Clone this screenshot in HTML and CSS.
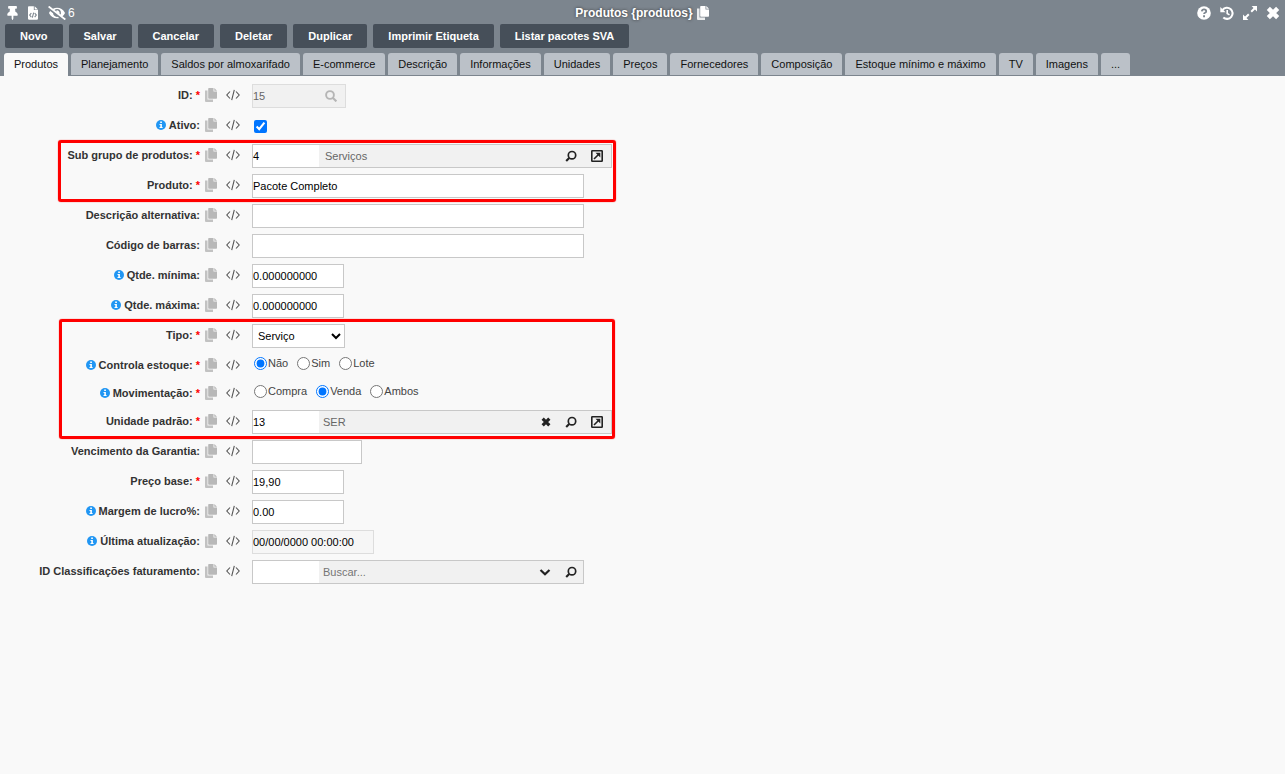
FILE: index.html
```html
<!DOCTYPE html>
<html lang="pt-BR">
<head>
<meta charset="utf-8">
<title>Produtos</title>
<link rel="stylesheet" href="styles.css">
</head>
<body>
<svg class="sprite" aria-hidden="true">
  <symbol id="pin" viewBox="0 0 384 512"><path d="M298 214.300L285.800 96H328c13.300 0 24-10.700 24-24V24c0-13.300-10.700-24-24-24H56C42.700 0 32 10.700 32 24v48c0 13.300 10.700 24 24 24h42.200L86 214.300C37.500 236.800 0 277.300 0 328c0 13.300 10.700 24 24 24h136v104c0 1.200.3 2.500.8 3.600l24 48c3 5.900 11.400 5.900 14.300 0l24-48a8 8 0 0 0 .9-3.600V352h136c13.300 0 24-10.700 24-24 0-51.200-38-91.400-86-113.700z"/></symbol>
  <symbol id="file" viewBox="0 0 12 16"><path fill-rule="evenodd" d="M1 0H7V4.500H12V15q0 1-1 1H1q-1 0-1-1V1Q0 0 1 0zM8 0L12 3.800H8z"/><path d="M4 8L2 10.500 4 13M8 8l2 2.500L8 13M6.800 7.500l-1.600 6" fill="none" stroke="#7c858e" stroke-width="1.300"/></symbol>
  <symbol id="eye" viewBox="0 0 640 512"><path d="M320 400c-75.850 0-137.250-58.710-142.900-133.110L72.200 185.820c-13.790 17.300-26.480 35.590-36.720 55.590a32.350 32.350 0 0 0 0 29.190C89.710 376.410 197.070 448 320 448c26.910 0 52.870-4 77.890-10.460L346 397.390a144.130 144.130 0 0 1-26 2.610zm313.820 58.100l-110.550-85.440a331.250 331.250 0 0 0 81.250-102.070 32.350 32.350 0 0 0 0-29.190C550.290 135.590 442.930 64 320 64a308.150 308.150 0 0 0-147.320 37.700L45.460 3.370A16 16 0 0 0 23 6.180L3.370 31.450A16 16 0 0 0 6.180 53.900l588.360 454.730a16 16 0 0 0 22.460-2.810l19.640-25.270a16 16 0 0 0-2.820-22.450zM450.190 314.540L411 284.250a93.700 93.700 0 0 0 4.900-28.250 94.770 94.770 0 0 0-121-92.320A47.650 47.650 0 0 1 304 192a46.640 46.640 0 0 1-1.540 10l-73.610-56.890A142.310 142.310 0 0 1 320 112a143.920 143.920 0 0 1 144 144c0 21.630-5.290 41.790-13.810 58.540z"/></symbol>
  <symbol id="copy" viewBox="0 0 12 14"><path d="M0 2.500h2.500V11.500H8V14H1q-1 0-1-1z" opacity=".85"/><path d="M4 0H8.500V3.500H12V10q0 .8-.8.8H4q-.8 0-.8-.8V.8Q3.200 0 4 0zM9.300 0L12 2.700H9.300z"/></symbol>
  <symbol id="code" viewBox="0 0 14 12"><path d="M4 2.500L.8 6 4 9.500M10 2.500L13.200 6 10 9.500M8.300.8L5.700 11.200" fill="none" stroke="currentColor" stroke-width="1.100"/></symbol>
  <symbol id="info" viewBox="0 0 10 10"><circle cx="5" cy="5" r="5"/><path d="M4.200 1.600h1.700v1.500H4.200zM3.500 4h2.400v3h.7v1.100H3.500V7h.8V5.100h-.8z" fill="#fff"/></symbol>
  <symbol id="search" viewBox="0 0 12 12"><circle cx="5" cy="5" r="3.900" fill="none" stroke="currentColor" stroke-width="1.900"/><path d="M8 8l3.400 3.400" stroke="currentColor" stroke-width="2.100"/></symbol>
  <symbol id="find" viewBox="0 0 12 12"><circle cx="7" cy="5.200" r="3.700" fill="none" stroke="currentColor" stroke-width="1.700"/><path d="M4.200 8L1.200 11" stroke="currentColor" stroke-width="2.100"/></symbol>
  <symbol id="open" viewBox="0 0 12 12"><rect x=".8" y=".8" width="10.400" height="10.400" rx=".5" fill="none" stroke="currentColor" stroke-width="1.600"/><path d="M3 9l4.500-4.500" stroke="currentColor" stroke-width="1.600"/><path d="M4.500 2.700h4.800v4.800z"/></symbol>
  <symbol id="close" viewBox="0 0 12 12"><path d="M2 2l8 8M10 2l-8 8" stroke="currentColor" stroke-width="3.800"/></symbol>
  <symbol id="down" viewBox="0 0 12 12"><path d="M1.500 4L6 8.300 10.500 4" fill="none" stroke="currentColor" stroke-width="2.200"/></symbol>
  <symbol id="help" viewBox="0 0 14 14"><circle cx="7" cy="7" r="6.800"/><path d="M4.800 5.300q.3-1.900 2.200-1.900 2.200 0 2.200 1.800 0 1-1.200 1.600-.9.400-.9 1.300" fill="none" stroke="#7c858e" stroke-width="1.800"/><path d="M6.100 9.300h1.900v1.900H6.100z" fill="#7c858e"/></symbol>
  <symbol id="history" viewBox="0 0 14 14"><path d="M2.600 3.800A5.600 5.600 0 1 1 3.300 11.500" fill="none" stroke="currentColor" stroke-width="2.100"/><path d="M.3.900V6.200H5.600z"/><path d="M7.200 3.900v3.600l2.300 1.400" fill="none" stroke="currentColor" stroke-width="1.600"/></symbol>
  <symbol id="expand" viewBox="0 0 14 14"><path d="M8.200 5.800L12 2M5.800 8.200L2 12" stroke="currentColor" stroke-width="2"/><path d="M8.600 0H14v5.400zM0 8.600V14h5.400z"/></symbol>
</svg>

<header class="header">
  <div class="titlebar">
    <div class="tools">
      <button class="icon-btn" aria-label="Fixar"><svg class="icon pin"><use href="#pin"/></svg></button>
      <button class="icon-btn" aria-label="Código"><svg class="icon file"><use href="#file"/></svg></button>
      <button class="icon-btn hidden-count" aria-label="Campos ocultos"><svg class="icon eye"><use href="#eye"/></svg>6</button>
    </div>
    <h1 class="title">Produtos {produtos}<svg class="icon title-copy"><use href="#copy"/></svg></h1>
    <div class="window-tools">
      <button class="icon-btn" aria-label="Ajuda"><svg class="icon large"><use href="#help"/></svg></button>
      <button class="icon-btn" aria-label="Histórico"><svg class="icon large"><use href="#history"/></svg></button>
      <button class="icon-btn" aria-label="Expandir"><svg class="icon large"><use href="#expand"/></svg></button>
      <button class="icon-btn" aria-label="Fechar"><svg class="icon large"><use href="#close"/></svg></button>
    </div>
  </div>
  <div class="actions">
    <button class="action">Novo</button>
    <button class="action">Salvar</button>
    <button class="action">Cancelar</button>
    <button class="action">Deletar</button>
    <button class="action">Duplicar</button>
    <button class="action">Imprimir Etiqueta</button>
    <button class="action">Listar pacotes SVA</button>
  </div>
  <nav class="tabs">
    <a class="tab active" href="#produtos">Produtos</a>
    <a class="tab" href="#planejamento">Planejamento</a>
    <a class="tab" href="#saldos">Saldos por almoxarifado</a>
    <a class="tab" href="#ecommerce">E-commerce</a>
    <a class="tab" href="#descricao">Descrição</a>
    <a class="tab" href="#informacoes">Informações</a>
    <a class="tab" href="#unidades">Unidades</a>
    <a class="tab" href="#precos">Preços</a>
    <a class="tab" href="#fornecedores">Fornecedores</a>
    <a class="tab" href="#composicao">Composição</a>
    <a class="tab" href="#estoque">Estoque mínimo e máximo</a>
    <a class="tab" href="#tv">TV</a>
    <a class="tab" href="#imagens">Imagens</a>
    <a class="tab" href="#mais">...</a>
  </nav>
</header>

<form class="form">
  <div class="row">
    <label class="label" for="id">ID: <span class="req">*</span></label>
    <span class="marks"><svg class="icon copy"><use href="#copy"/></svg><svg class="icon code"><use href="#code"/></svg></span>
    <div class="combo id-box"><input class="combo-text id-text" id="id" value="15" disabled><svg class="icon small"><use href="#search"/></svg></div>
  </div>
  <div class="row">
    <label class="label" for="ativo"><svg class="icon info"><use href="#info"/></svg>Ativo:</label>
    <span class="marks"><svg class="icon copy"><use href="#copy"/></svg><svg class="icon code"><use href="#code"/></svg></span>
    <input class="tick" id="ativo" type="checkbox" checked>
  </div>
  <div class="group group-product">
    <div class="row">
      <label class="label" for="sub">Sub grupo de produtos: <span class="req">*</span></label>
      <span class="marks"><svg class="icon copy"><use href="#copy"/></svg><svg class="icon code"><use href="#code"/></svg></span>
      <div class="combo wide-box"><input class="combo-code" id="sub" value="4"><input class="combo-text inset" aria-label="Nome do sub grupo" value="Serviços"><button class="icon-btn" type="button" aria-label="Buscar"><svg class="icon small"><use href="#find"/></svg></button><button class="icon-btn" type="button" aria-label="Abrir"><svg class="icon small"><use href="#open"/></svg></button></div>
    </div>
    <div class="row">
      <label class="label" for="produto">Produto: <span class="req">*</span></label>
      <span class="marks"><svg class="icon copy"><use href="#copy"/></svg><svg class="icon code"><use href="#code"/></svg></span>
      <input class="field long" id="produto" value="Pacote Completo">
    </div>
  </div>
  <div class="row">
    <label class="label" for="alt">Descrição alternativa:</label>
    <span class="marks"><svg class="icon copy"><use href="#copy"/></svg><svg class="icon code"><use href="#code"/></svg></span>
    <input class="field long" id="alt">
  </div>
  <div class="row">
    <label class="label" for="barras">Código de barras:</label>
    <span class="marks"><svg class="icon copy"><use href="#copy"/></svg><svg class="icon code"><use href="#code"/></svg></span>
    <input class="field long" id="barras">
  </div>
  <div class="row">
    <label class="label" for="min"><svg class="icon info"><use href="#info"/></svg>Qtde. mínima:</label>
    <span class="marks"><svg class="icon copy"><use href="#copy"/></svg><svg class="icon code"><use href="#code"/></svg></span>
    <input class="field short" id="min" value="0.000000000">
  </div>
  <div class="row">
    <label class="label" for="max"><svg class="icon info"><use href="#info"/></svg>Qtde. máxima:</label>
    <span class="marks"><svg class="icon copy"><use href="#copy"/></svg><svg class="icon code"><use href="#code"/></svg></span>
    <input class="field short" id="max" value="0.000000000">
  </div>
  <div class="group group-type">
    <div class="row">
      <label class="label" for="tipo">Tipo: <span class="req">*</span></label>
      <span class="marks"><svg class="icon copy"><use href="#copy"/></svg><svg class="icon code"><use href="#code"/></svg></span>
      <select class="field select" id="tipo"><option>Serviço</option></select>
    </div>
    <div class="row radio-row" role="radiogroup" aria-labelledby="controla">
      <span class="label" id="controla"><svg class="icon info"><use href="#info"/></svg>Controla estoque: <span class="req">*</span></span>
      <span class="marks"><svg class="icon copy"><use href="#copy"/></svg><svg class="icon code"><use href="#code"/></svg></span>
      <div class="radios">
        <label class="choice"><input class="radio" type="radio" name="controla" checked>Não</label>
        <label class="choice"><input class="radio" type="radio" name="controla">Sim</label>
        <label class="choice"><input class="radio" type="radio" name="controla">Lote</label>
      </div>
    </div>
    <div class="row radio-row" role="radiogroup" aria-labelledby="mov">
      <span class="label" id="mov"><svg class="icon info"><use href="#info"/></svg>Movimentação: <span class="req">*</span></span>
      <span class="marks"><svg class="icon copy"><use href="#copy"/></svg><svg class="icon code"><use href="#code"/></svg></span>
      <div class="radios">
        <label class="choice"><input class="radio" type="radio" name="mov">Compra</label>
        <label class="choice"><input class="radio" type="radio" name="mov" checked>Venda</label>
        <label class="choice"><input class="radio" type="radio" name="mov">Ambos</label>
      </div>
    </div>
    <div class="row">
      <label class="label" for="unidade">Unidade padrão: <span class="req">*</span></label>
      <span class="marks"><svg class="icon copy"><use href="#copy"/></svg><svg class="icon code"><use href="#code"/></svg></span>
      <div class="combo wide-box"><input class="combo-code" id="unidade" value="13"><input class="combo-text" aria-label="Nome da unidade" value="SER"><button class="icon-btn" type="button" aria-label="Limpar"><svg class="icon clear"><use href="#close"/></svg></button><button class="icon-btn" type="button" aria-label="Buscar"><svg class="icon small"><use href="#find"/></svg></button><button class="icon-btn" type="button" aria-label="Abrir"><svg class="icon small"><use href="#open"/></svg></button></div>
    </div>
  </div>
  <div class="row">
    <label class="label" for="garantia">Vencimento da Garantia:</label>
    <span class="marks"><svg class="icon copy"><use href="#copy"/></svg><svg class="icon code"><use href="#code"/></svg></span>
    <input class="field date" id="garantia">
  </div>
  <div class="row">
    <label class="label" for="preco">Preço base: <span class="req">*</span></label>
    <span class="marks"><svg class="icon copy"><use href="#copy"/></svg><svg class="icon code"><use href="#code"/></svg></span>
    <input class="field short" id="preco" value="19,90">
  </div>
  <div class="row">
    <label class="label" for="margem"><svg class="icon info"><use href="#info"/></svg>Margem de lucro%:</label>
    <span class="marks"><svg class="icon copy"><use href="#copy"/></svg><svg class="icon code"><use href="#code"/></svg></span>
    <input class="field short" id="margem" value="0.00">
  </div>
  <div class="row">
    <label class="label" for="ultima"><svg class="icon info"><use href="#info"/></svg>Última atualização:</label>
    <span class="marks"><svg class="icon copy"><use href="#copy"/></svg><svg class="icon code"><use href="#code"/></svg></span>
    <input class="field datetime" id="ultima" value="00/00/0000 00:00:00" readonly>
  </div>
  <div class="row">
    <label class="label" for="classif">ID Classificações faturamento:</label>
    <span class="marks"><svg class="icon copy"><use href="#copy"/></svg><svg class="icon code"><use href="#code"/></svg></span>
    <div class="combo long"><input class="combo-code" id="classif"><input class="combo-text" aria-label="Buscar classificação" placeholder="Buscar..."><button class="icon-btn" type="button" aria-label="Listar"><svg class="icon small"><use href="#down"/></svg></button><button class="icon-btn" type="button" aria-label="Buscar"><svg class="icon small"><use href="#find"/></svg></button></div>
  </div>
</form>
</body>
</html>
```

FILE: styles.css
```css
*, *::after { box-sizing: border-box; }

body {
  margin: 0;
  background: #f9f9f9;
  color: #444;
  font: 11px/14px "Liberation Sans", Arial, sans-serif;
}

button, input, select { font: inherit; }

.sprite { display: none; }

.icon { display: block; flex: none; fill: currentColor; }

.icon-btn {
  display: flex;
  align-items: center;
  padding: 0;
  border: 0;
  background: none;
  color: inherit;
}

/* Header */
.header {
  background: #7c858e;
  color: #fff;
}

.titlebar {
  display: grid;
  grid-template-columns: 1fr auto 1fr;
  align-items: center;
  height: 24px;
  padding: 2px 5px 0 7px;
}

.tools { display: flex; align-items: center; gap: 10px; }
.window-tools { display: flex; align-items: center; justify-content: flex-end; gap: 9px; }

.pin { width: 11px; height: 14px; }
.file { width: 10px; height: 14px; }
.eye { width: 18px; height: 14px; }
.large { width: 14px; height: 14px; }
.small { width: 12px; height: 12px; }
.hidden-count { gap: 2px; font-size: 12px; }

.title {
  display: flex;
  align-items: center;
  gap: 4px;
  margin: 0 3px 0 0;
  font-size: 12px;
  line-height: 14px;
  text-shadow: 0 0 3px #333;
}

.title-copy { width: 12px; height: 14px; }

.actions { display: flex; gap: 6px; padding: 0 5px; }

.action {
  height: 24px;
  padding: 0 15px;
  border: 0;
  border-radius: 2px;
  background: #464f59;
  color: #fff;
  font-weight: bold;
}

.tabs { display: flex; gap: 3px; padding: 5px 4px 0; }

.tab {
  height: 22px;
  margin-bottom: 1px;
  padding: 0 10px;
  border-radius: 3px 3px 0 0;
  background: #bbc1c8;
  color: #111;
  line-height: 22px;
  text-decoration: none;
}

.tab.active { height: 23px; margin-bottom: 0; background: #f9f9f9; }

/* Form */
.form { padding-top: 4px; }

.row { display: flex; min-height: 30px; padding: 4px 0 2px; }

.label {
  display: flex;
  justify-content: flex-end;
  align-items: center;
  gap: 3px;
  flex: none;
  width: 200px;
  height: 22px;
  color: #333;
  font-weight: bold;
}

.req { color: #f00; }

.marks {
  display: flex;
  align-items: center;
  gap: 9px;
  flex: none;
  width: 52px;
  height: 22px;
  padding-left: 5px;
}

.copy { width: 12px; height: 14px; color: #b8b8b8; }
.code { width: 14px; height: 12px; color: #555; }
.info { width: 10px; height: 10px; color: #2196f3; }

.field {
  height: 24px;
  padding: 0;
  border: 1px solid #c8c8c8;
  border-radius: 0;
  background: #fff;
  color: #000;
}

.long { width: 332px; }
.short { width: 92px; }
.date { width: 110px; }
.datetime { width: 122px; border-color: #ddd; background: #f6f6f6; }
.select { width: 93px; padding-left: 1px; }

.combo {
  display: flex;
  align-items: center;
  gap: 14px;
  height: 24px;
  padding-right: 8px;
  border: 1px solid #c8c8c8;
  background: #f1f1f1;
  color: #222;
}

.combo.long { padding-right: 6px; }
.wide-box { width: 360px; }
.id-box { width: 94px; border-color: #ddd; color: #b5b5b5; }

.combo-code {
  width: 66px;
  height: 22px;
  padding: 0;
  border: 0;
  background: #fff;
  color: #000;
}

.combo-text {
  flex: 1;
  min-width: 0;
  height: 22px;
  margin-left: -14px;
  padding: 0 0 0 4px;
  border: 0;
  background: transparent;
  color: #666;
}

.combo-text.inset { padding-left: 6px; }
.combo-text.id-text { margin-left: 0; padding: 0; }
.clear { width: 10px; height: 10px; }

.tick { width: 13px; height: 13px; margin: 6px 2px 0; }

.radio-row { min-height: 28px; padding-bottom: 0; }

.radios { display: flex; gap: 9px; height: 18px; padding-left: 2px; }
.choice { display: flex; align-items: center; gap: 1px; }
.radio { width: 13px; height: 13px; margin: 0; }

/* Red frames laid over the highlighted rows */
.group { position: relative; }

.group::after {
  content: "";
  position: absolute;
  top: 0;
  left: 58px;
  width: 558px;
  height: 62px;
  border: 3px solid #f00;
  border-radius: 3px;
  box-shadow: 0 0 1px #f00;
  pointer-events: none;
}

.group-type::after {
  top: -1px;
  left: 59px;
  width: 556px;
  height: 120px;
}
```
